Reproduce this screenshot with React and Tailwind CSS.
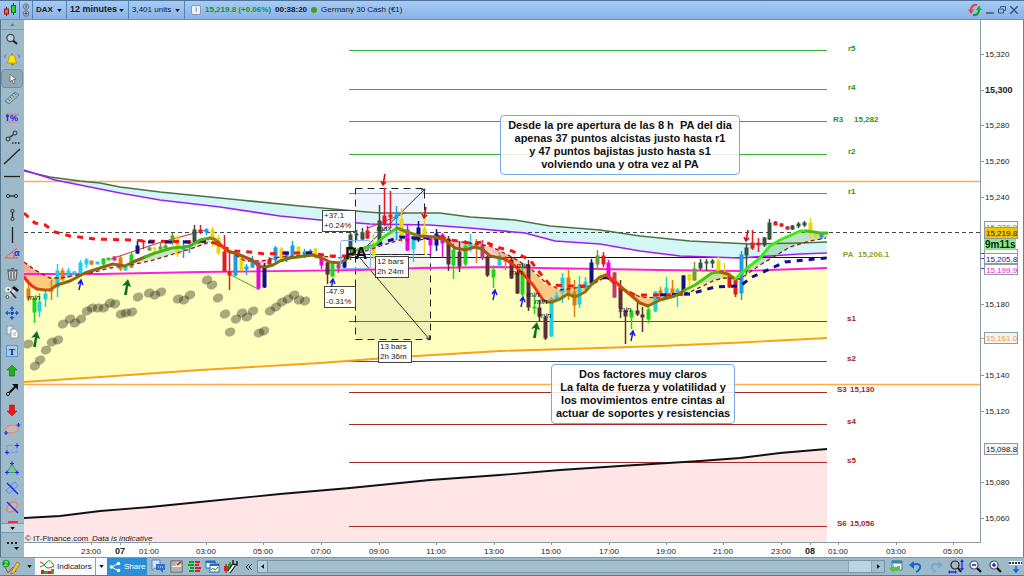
import { useState } from 'react';

const TIMES = [
  [91, '23:00'], [120, '07', true], [149, '01:00'], [206, '03:00'], [263, '05:00'], [321, '07:00'],
  [379, '09:00'], [436, '11:00'], [494, '13:00'], [551, '15:00'], [609, '17:00'], [666, '19:00'],
  [723, '21:00'], [781, '23:00'], [810, '08', true], [838, '01:00'], [896, '03:00'], [953, '05:00'],
];

const PRICES = [
  [54, '15,320'], [90, '15,300', true], [125, '15,280'], [161, '15,260'], [197, '15,240'], [304, '15,180'],
  [375, '15,140'], [411, '15,120'], [482, '15,080'], [518, '15,060'],
];

const LEVELS = [
  { y: 50, label: 'r5', x: 848, ly: 51, up: true },
  { y: 89, label: 'r4', x: 848, ly: 90, up: true },
  { y: 121, label: 'R3', x: 833, ly: 122, value: '15,282', vx: 854, up: true },
  { y: 154, label: 'r2', x: 848, ly: 154, up: true },
  { y: 193, label: 'r1', x: 848, ly: 194, up: true },
  { y: 321, label: 's1', x: 847, ly: 321 },
  { y: 361, label: 's2', x: 847, ly: 361 },
  { y: 392, label: 'S3', x: 837, ly: 392, value: '15,130', vx: 850 },
  { y: 424, label: 's4', x: 847, ly: 424 },
  { y: 462, label: 's5', x: 847, ly: 463 },
  { y: 526, label: 'S6', x: 837, ly: 526, value: '15,056', vx: 850 },
];

const C = {
  cy: '#22cfe0', or: '#dd7d14', gr: '#1fd41f', br: '#5c2e3a', mg: '#f000dd', nv: '#10108c', re: '#e31a24',
  ye: '#e8d80c', bl: '#1c9fe0', dk: '#35553c', ol: '#6f9e32', pk: '#c2387a',
};

// x, high, low, body top, body bottom, colour
const CANDLES = [
  [28, 284, 301, 289, 298, 'or'], [34, 298, 323, 299, 312, 'gr'], [39, 293, 317, 302, 311, 'cy'],
  [45, 290, 307, 294, 299, 'cy'], [51, 280, 300, 290, 291, 'or'], [57, 264, 297, 271, 287, 'cy'],
  [62, 268, 281, 271, 279, 'or'], [68, 268, 278, 271, 277, 'cy'], [74, 271, 275, 272, 274, 'cy'],
  [80, 260, 275, 263, 273, 'cy'], [86, 258, 268, 260, 264, 'cy'], [91, 261, 265, 261, 264, 'or'],
  [97, 262, 264, 262, 264, 'cy'], [103, 258, 267, 259, 264, 'gr'], [108, 258, 260, 258, 260, 'gr'],
  [114, 256, 261, 257, 260, 'pk'], [120, 256, 271, 258, 269, 'or'], [125, 266, 271, 267, 270, 'cy'],
  [131, 252, 268, 255, 267, 'gr'], [137, 241, 254, 246, 253, 'nv'], [143, 240, 249, 241, 242, 're'],
  [149, 245, 251, 248, 250, 'ol'], [154, 247, 252, 248, 249, 'ye'], [160, 243, 250, 247, 249, 'ol'],
  [165, 243, 250, 246, 248, 'ol'], [172, 233, 245, 236, 240, 'ol'], [177, 236, 257, 238, 254, 'ye'],
  [183, 240, 258, 247, 249, 'bl'], [189, 241, 253, 242, 243, 'bl'], [194, 225, 243, 230, 242, 'dk'],
  [200, 225, 234, 230, 231, 're'], [206, 228, 235, 230, 232, 'bl'], [212, 227, 247, 230, 238, 'ye'],
  [218, 235, 255, 238, 253, 'ye'], [224, 235, 272, 252, 271, 're'], [229, 250, 290, 272, 275, 're'],
  [235, 254, 276, 255, 275, 'bl'], [241, 255, 271, 257, 270, 'ye'], [246, 264, 275, 267, 269, 'bl'],
  [252, 256, 268, 262, 267, 'bl'], [258, 262, 290, 263, 288, 'mg'], [264, 263, 288, 266, 287, 'nv'],
  [269, 257, 266, 260, 264, 're'], [275, 246, 262, 248, 260, 'bl'], [281, 247, 262, 249, 259, 'ye'],
  [286, 252, 262, 254, 258, 'bl'], [292, 241, 258, 246, 255, 'bl'], [298, 246, 258, 247, 256, 'ye'],
  [304, 249, 258, 252, 256, 'bl'], [310, 249, 256, 251, 254, 'bl'], [315, 248, 259, 249, 257, 'ye'],
  [321, 254, 269, 258, 265, 'mg'], [327, 262, 284, 263, 274, 'br'], [332, 262, 277, 264, 276, 'gr'],
  [338, 263, 273, 265, 268, 'pk'], [344, 257, 268, 260, 267, 'nv'], [350, 228, 260, 235, 250, 'dk'],
  [356, 230, 240, 234, 235, 'dk'], [362, 228, 240, 233, 239, 'dk'], [367, 226, 239, 231, 238, 're'],
  [373, 234, 259, 243, 255, 'ye'], [379, 205, 243, 221, 242, 'dk'], [384, 188, 226, 216, 224, 're'],
  [390, 191, 228, 215, 217, 're'], [396, 206, 240, 215, 218, 'bl'], [401, 208, 243, 219, 235, 'ye'],
  [407, 225, 251, 230, 250, 'mg'], [413, 236, 262, 240, 249, 'cy'], [418, 221, 242, 228, 240, 'nv'],
  [424, 213, 254, 229, 236, 'ye'], [430, 236, 255, 239, 245, 'mg'], [436, 229, 251, 234, 245, 'nv'],
  [442, 233, 258, 235, 243, 'mg'], [448, 236, 271, 239, 264, 'br'], [453, 243, 279, 250, 265, 'gr'],
  [459, 241, 272, 252, 266, 'br'], [465, 240, 266, 246, 264, 'gr'], [470, 234, 252, 243, 247, 'cy'],
  [476, 239, 263, 244, 247, 'or'], [482, 240, 260, 245, 258, 'pk'], [487, 253, 277, 257, 275, 'br'],
  [493, 265, 288, 270, 277, 'gr'], [499, 252, 267, 256, 265, 'cy'], [505, 256, 270, 259, 261, 'or'],
  [511, 258, 279, 260, 278, 'br'], [517, 266, 294, 273, 293, 'br'], [522, 264, 296, 272, 294, 'gr'],
  [528, 260, 311, 265, 307, 'br'], [534, 295, 314, 307, 308, 'gr'], [539, 300, 321, 308, 316, 'br'],
  [545, 316, 340, 318, 338, 'br'], [551, 297, 337, 299, 336, 'cy'], [556, 292, 302, 296, 300, 'cy'],
  [562, 273, 303, 278, 292, 'cy'], [568, 270, 300, 278, 292, 'or'], [574, 280, 317, 292, 305, 'or'],
  [579, 276, 308, 285, 304, 'cy'], [585, 277, 290, 282, 288, 'cy'], [591, 259, 285, 263, 283, 'nv'],
  [597, 250, 269, 256, 264, 'ol'], [603, 252, 267, 256, 264, 're'], [608, 260, 280, 263, 277, 'mg'],
  [614, 272, 298, 273, 297, 'pk'], [620, 280, 318, 289, 308, 'br'], [625, 310, 344, 311, 316, 'br'],
  [631, 310, 329, 311, 317, 'gr'], [637, 302, 316, 311, 314, 'br'], [642, 307, 332, 315, 317, 'br'],
  [648, 308, 323, 310, 319, 'gr'], [655, 291, 312, 292, 311, 'cy'], [660, 287, 297, 291, 295, 'or'],
  [666, 277, 296, 288, 293, 'cy'], [672, 280, 295, 289, 293, 'or'], [677, 288, 307, 290, 294, 'cy'],
  [683, 275, 292, 276, 290, 'nv'], [689, 274, 285, 275, 280, 'ye'], [694, 262, 281, 269, 280, 'ol'],
  [700, 259, 270, 263, 268, 'dk'], [706, 259, 271, 262, 263, 'dk'], [712, 259, 268, 261, 263, 'dk'],
  [718, 257, 273, 261, 272, 'ye'], [724, 263, 278, 273, 276, 'ye'], [729, 273, 288, 276, 287, 're'],
  [735, 278, 297, 279, 294, 're'], [741, 251, 300, 255, 293, 'bl'], [746, 244, 274, 248, 255, 'dk'],
  [752, 230, 250, 243, 248, 're'], [758, 238, 252, 243, 245, 're'], [764, 237, 247, 238, 245, 'dk'],
  [769, 219, 240, 223, 239, 'dk'], [775, 221, 225, 222, 225, 're'], [781, 223, 227, 224, 226, 're'],
  [787, 226, 230, 227, 229, 're'], [792, 225, 230, 226, 229, 'dk'], [798, 222, 228, 224, 226, 'dk'],
  [804, 221, 227, 223, 225, 'dk'], [810, 218, 238, 223, 233, 'ye'], [815, 234, 238, 235, 237, 'ye'],
  [821, 233, 239, 234, 237, 'bl'],
];

const DOTS = [
  [28, 344], [35, 366], [40, 360], [46, 350], [52, 342], [58, 340], [63, 324], [70, 319], [75, 323], [81, 319],
  [87, 311], [92, 308], [98, 308], [104, 308], [110, 303], [115, 304], [121, 314], [126, 313], [132, 312],
  [138, 297], [149, 293], [155, 295], [161, 292], [178, 299], [184, 300], [190, 295], [207, 280], [212, 285],
  [218, 298], [225, 314], [230, 332], [236, 319], [242, 313], [247, 317], [253, 311], [259, 333], [264, 331],
  [270, 311], [276, 307], [282, 302], [288, 299], [294, 295], [299, 300], [305, 301],
];

const GREEN_MA = '24,171 50,177 80,181 100,183 120,187 160,192 200,196 240,200 300,206 355,211 380,213 440,213 470,217 515,220 550,226 600,230 640,236 690,241 750,244 800,243 827,242';
const PURPLE_MA = '24,170 55,180 80,185 120,193 160,200 220,207 280,216 320,220 370,224 430,225 470,228 525,233 555,241 600,244 640,251 680,256 740,258 800,254 827,253';
const PURPLE_BACK = '827,253 800,254 740,258 680,256 640,251 600,244 555,241 525,233 470,228 430,225 370,224 320,220 280,216 220,207 160,200 120,193 80,185 55,180 24,170';
const MAGENTA_MA = '24,274 100,274 200,272 360,270 420,268 500,267 540,268 660,270 740,271 827,268';
const ORANGE_BACK = '827,338 770,341 730,343 660,346 600,348 500,351 400,357 320,363 200,370 100,377 24,382';
const BLACK_MA = '24,518 60,516 100,511 150,507 200,502 280,494 350,488 430,480 500,475 560,470 620,466 700,461 740,458 780,453 827,449';

// the ribbon core line, coloured by trend
const CORE = [
  ['#e8301a', '24,277 28,282 32,286 37,289'],
  ['#c2560f', '37,289 45,290 50,290 57,285'],
  ['#87680d', '57,285 70,281 85,273 100,268 113,264 125,266 133,262 145,257'],
  ['#45b414', '145,257 155,253 172,248 183,247 190,246 200,240 210,238'],
  ['#9a7a10', '210,238 214,239 218,242'],
  ['#ef3112', '218,242 223,247 228,251'],
  ['#a0560f', '228,251 240,255 252,260 260,267 266,267'],
  ['#77730d', '266,267 273,265 280,261 290,258 305,256 313,255'],
  ['#9a5f12', '313,255 322,258 330,262 340,263'],
  ['#77730d', '340,263 347,259 354,251'],
  ['#3fdc12', '354,251 365,248 375,245 385,236 397,228'],
  ['#7f8710', '397,228 410,233 420,236'],
  ['#9a5f12', '420,236 435,237 445,240 455,248 465,250 475,247 482,249 490,256 505,259'],
  ['#ed3512', '505,259 515,266 525,276 533,285 543,300'],
  ['#9a5f12', '543,300 547,302 552,302'],
  ['#87780d', '552,302 560,299 568,294 575,297 585,292 592,284 600,277 606,275'],
  ['#f0340f', '606,275 615,281 621,287'],
  ['#b0560f', '621,287 627,292 640,303 648,306'],
  ['#7f740d', '648,306 660,300 675,296 685,290'],
  ['#4ec010', '685,290 695,285 705,278 712,273 720,272'],
  ['#a5600f', '720,272 728,274 735,279'],
  ['#3cec12', '735,279 745,270 760,258 770,246 780,240 800,231 806,231'],
  ['#55b818', '806,231 814,232 820,233 827,233'],
];

const BANDS = [
  ['#f6a94f', 0.6, '24,262 35,270 50,278 62,278 57,285 50,290 37,289 24,277'],
  ['#f59a9a', 0.6, '24,262 35,270 50,278 37,275 24,272'],
  ['#8fce8f', 0.5, '145,257 172,248 190,246 210,238 210,242 190,250 160,258 133,264'],
  ['#f5a8a0', 0.6, '222,247 245,261 262,261 275,259 262,267 252,260 240,255'],
  ['#8fce8f', 0.5, '354,251 375,245 397,228 410,235 400,240 380,246'],
  ['#f5a8a0', 0.6, '445,240 470,243 490,246 505,253 515,258 505,259 490,256 475,247 465,250 455,248'],
  ['#fbb26c', 0.7, '490,249 505,254 518,259 532,271 545,284 560,290 572,288 590,286 585,291 568,294 552,302 545,301 533,285 515,266'],
  ['#fbb26c', 0.7, '608,276 620,286 635,294 648,298 665,297 648,306 640,303 625,291'],
  ['#9dd08a', 0.6, '690,288 705,278 712,273 728,273 735,279 725,278 712,281'],
  ['#8fd0a0', 0.6, '735,279 745,270 760,258 770,246 780,240 800,231 827,233 827,238 810,241 790,247 760,265'],
];

const ARROWS = [
  [80, 280, 'blue'], [332, 279, 'blue'], [494, 290, 'blue'], [522, 297, 'blue'], [632, 331, 'blue'],
  [36, 331, 'green'], [127, 279, 'green'], [536, 322, 'green'],
  [383, 186, 'red'], [424, 219, 'red'], [746, 242, 'red'],
];

const MINS = [[34, 300], [516, 275], [523, 268], [533, 297], [541, 304], [545, 318], [625, 312]];

function Arrow({ x, y, kind }) {
  if (kind === 'green') {
    return <path d={`M${x + 1} ${y} L${x - 5} ${y + 7} L${x - 1} ${y + 6} L${x - 3} ${y + 16} L${x} ${y + 16} L${x + 1} ${y + 7} L${x + 4} ${y + 8} Z`} fill="#077020" />;
  }
  if (kind === 'red') {
    return <path d={`M${x + 2} ${y - 12} L${x} ${y - 1} M${x - 2} ${y - 5} L${x} ${y - 1} L${x + 3} ${y - 4}`} stroke="#d80c0c" strokeWidth="1.6" fill="none" />;
  }
  return <path d={`M${x - 1} ${y + 10} L${x + 1} ${y + 1} M${x - 2} ${y + 4} L${x + 1} ${y} L${x + 3} ${y + 5}`} stroke="#1414ee" strokeWidth="1.4" fill="none" />;
}

function PriceChart() {
  return (
    <svg viewBox="24 20 956 523" preserveAspectRatio="xMinYMin meet" className="block h-full w-full font-['Liberation_Sans',Arial,sans-serif] text-[8px]">
      <polygon points={`${MAGENTA_MA} ${ORANGE_BACK}`} fill="#ffffbf" />
      <polygon points={`${BLACK_MA} 827,543 24,543`} fill="#ffe5e5" />
      <polygon points={`${GREEN_MA} ${PURPLE_BACK}`} fill="#d5f6f6" />
      {BANDS.map(([fill, opacity, pts]) => <polygon key={pts} points={pts} fill={fill} opacity={opacity} />)}

      {/* full-width horizontals */}
      <path d="M24 181.5H980M24 384.5H980" stroke="#ffab4d" strokeWidth="1.5" />
      <path d="M24 232.5H980" stroke="#444" strokeDasharray="4 3" />

      {LEVELS.map((l) => (
        <g key={l.label} fill={l.up ? '#1a9a1a' : '#a81c1c'} fontWeight="bold">
          <path d={`M349 ${l.y}.5H827`} stroke={l.up ? '#2fae2f' : '#a52a2a'} />
          <text x={l.x} y={l.ly}>{l.label}</text>
          {l.value && <text x={l.vx} y={l.ly}>{l.value}</text>}
        </g>
      ))}
      <path d="M349 257.5H827" stroke="#111" />
      <text x="843" y="257" fontWeight="bold" fill="#9c9a1c">PA</text>
      <text x="858" y="257" fontWeight="bold" fill="#9c9a1c">15,206.1</text>

      {DOTS.map(([x, y]) => (
        <ellipse key={`${x}-${y}`} cx={x} cy={y} rx="5.4" ry="4.4" transform={`rotate(-25 ${x} ${y})`} fill="#333322" opacity="0.42" />
      ))}

      {/* measured zones */}
      <g stroke="#222" strokeDasharray="7 5">
        <rect x="355.5" y="188.5" width="69" height="66" fill="#e6ecff" fillOpacity="0.5" />
        <rect x="355.5" y="254.5" width="75" height="85" fill="#c8d0a0" fillOpacity="0.25" />
      </g>
      <path d="M356 257L425 189M360 258L430 340M426 338l4 2-1-5M421 190l4-1-1 4" stroke="#333" fill="none" />

      <polyline points={GREEN_MA} fill="none" stroke="#4a7344" strokeWidth="1.6" />
      <polyline points={PURPLE_MA} fill="none" stroke="#a31cf5" strokeWidth="1.6" />
      <polyline points={MAGENTA_MA} fill="none" stroke="#ff22cc" strokeWidth="1.8" />
      <polyline points={ORANGE_BACK} fill="none" stroke="#f9a11b" strokeWidth="1.8" />
      <polyline points={BLACK_MA} fill="none" stroke="#111" strokeWidth="1.8" />
      <path d="M111 259L158 243L206 230M368 228L405 213" stroke="#c22a3a" fill="none" />
      <path d="M231 275L258 289" stroke="#2fae2f" />

      {CANDLES.map(([x, hi, lo, top, bottom, c]) => (
        <g key={x} stroke={C[c]} fill={C[c]}>
          <path d={`M${x}.5 ${hi}V${lo}`} strokeWidth="1.5" />
          <rect x={x - 1} y={top} width="3" height={bottom - top} strokeWidth="1" />
        </g>
      ))}

      <polyline points="24,262 35,270 50,278 60,278 90,273 110,268 130,265 150,261 180,252 190,249 210,242 222,247 245,261 262,261 280,257 310,255 330,257 345,258 380,246 400,240 440,239 470,243 490,246 510,256 530,268 545,282 560,290 590,286 605,277 620,287 640,297 660,298 690,292 715,280 725,278 740,279 760,265 790,247 810,241 826,238" fill="none" stroke="#a01212" strokeWidth="1.3" strokeDasharray="4 3" />
      <g fill="none" strokeWidth="3" strokeDasharray="6 6">
        <polyline points="24,213 35,223 45,225 55,232 70,236 95,239 130,240 145,241 200,242" stroke="#f81414" />
        <polyline points="200,241 215,243 225,248 235,251 250,252 265,254 285,253 310,253 330,256 350,256" stroke="#f81414" />
        <polyline points="365,248 385,242 400,237 418,238 440,237" stroke="#10108c" />
        <polyline points="440,237 452,240 470,243 485,242 500,248 512,251 530,260 540,273 550,285 570,286 590,286" stroke="#f81414" />
        <polyline points="592,283 602,278 610,277" stroke="#10108c" />
        <polyline points="610,279 620,288 635,295 665,295 690,294" stroke="#f81414" />
        <polyline points="660,295 690,294 715,287 740,286 752,277 770,269 785,262 805,260 827,258" stroke="#10108c" />
      </g>
      <path d="M148 242h6M165 242h7M183 242h7M200 241h6M283 253h6M306 253h6" stroke="#10108c" strokeWidth="3" />
      {CORE.map(([stroke, pts]) => (
        <polyline key={pts} points={pts} fill="none" stroke={stroke} strokeWidth="3" strokeLinecap="round" strokeLinejoin="round" />
      ))}

      <rect x="340.5" y="240.5" width="30" height="28" rx="2" fill="none" stroke="#8ab0f5" />
      <text x="345" y="259" fontSize="17" fontWeight="bold" fill="#111">PA</text>
      {MINS.map(([x, y]) => (
        <text key={`${x}-${y}`} x={x} y={y} textAnchor="middle" fontStyle="italic" fill="#111">min</text>
      ))}
      <text x="384" y="231" textAnchor="middle" fontStyle="italic" fill="#111">max</text>
      {ARROWS.map(([x, y, kind]) => <Arrow key={`${x}-${y}`} x={x} y={y} kind={kind} />)}

      <text x="25" y="541" fill="#222">© IT-Finance.com</text>
      <text x="92" y="541" fontStyle="italic" fill="#222">Data is indicative</text>
      <path d="M24 542.5H980" stroke="#8a9aa5" />
    </svg>
  );
}

const TAGS = [
  { y: 221, h: 12, text: '15,220.0', cls: 'fill-[#3aaa3a]', bg: '#f4fbf4' },
  { y: 249, h: 10, text: '15,208.2', cls: 'fill-[#a31cf5]', bg: '#ffffff' },
  { y: 253, h: 10, text: '15,205.8', cls: 'fill-[#14148c]', bg: '#ffffff' },
  { y: 264, h: 10, text: '15,199.9', cls: 'fill-[#f020d0]', bg: '#ffffff' },
  { y: 332, h: 11, text: '15,161.0', cls: 'fill-[#f0a030]', bg: '#f4f4f4' },
  { y: 443, h: 11, text: '15,098.8', cls: 'fill-[#222222]', bg: '#f4f4f4' },
  { y: 227, h: 11, text: '15,219.8', cls: 'fill-[#222222]', bg: '#f5c400' },
];

function PriceAxis() {
  return (
    <svg viewBox="980 20 44 537" preserveAspectRatio="xMinYMin meet" className="block w-11 shrink-0 bg-white font-['Liberation_Sans',Arial,sans-serif] text-[8px]">
      <path d="M980.5 20V543" stroke="#8a9aa5" />
      {PRICES.map(([y, text, bold]) => (
        <g key={text}>
          <path d={`M981 ${y}.5h3`} stroke="#8a9aa5" />
          <text x="985" y={y + 3} fontWeight={bold ? 'bold' : 'normal'} fontSize={bold ? 9 : 8} fill="#222">{text}</text>
        </g>
      ))}
      <path d="M981 253.5h3M981 258.5h3M981 268.5h3" stroke="#7a22c5" />
      <path d="M981 338.5h3" stroke="#f0a030" />
      {TAGS.map((t) => (
        <g key={t.text}>
          <rect x="984.5" y={t.y + 0.5} width="33" height={t.h} fill={t.bg} stroke="#8d9aa3" />
          <text x="986" y={t.y + 9} className={t.cls}>{t.text}</text>
        </g>
      ))}
      <rect x="984" y="239" width="32" height="11" fill="#8fe48f" />
      <text x="985" y="248" fontSize="10" fontWeight="bold" fill="#0a2a0a">9m11s</text>
      <path d="M1023.5 20V557" stroke="#6b8296" />
    </svg>
  );
}

function TimeAxis() {
  return (
    <svg viewBox="24 543 956 14" preserveAspectRatio="xMinYMin meet" className="block h-3.5 w-full bg-white font-['Liberation_Sans',Arial,sans-serif] text-[8px]">
      {TIMES.map(([x, text, bold]) => (
        <g key={x}>
          <path d={`M${x}.5 543v2`} stroke="#8a9aa5" />
          <text x={x} y="554" textAnchor="middle" fontWeight={bold ? 'bold' : 'normal'} fontSize={bold ? 9 : 8} fill="#222">{text}</text>
        </g>
      ))}
    </svg>
  );
}

function Note({ lines, className }) {
  return (
    <div className={`absolute rounded-sm border border-[#7aa7ea] bg-white/85 py-[3px] text-center text-[11px] leading-[13px] font-bold whitespace-pre text-[#111] ${className}`}>
      {lines.map((l) => <p key={l}>{l}</p>)}
    </div>
  );
}

function Measure({ lines, className }) {
  return (
    <div className={`absolute border border-[#444] bg-white/95 pl-px pr-1 text-[8px] leading-[10px] whitespace-nowrap text-[#222] ${className}`}>
      {lines.map((l) => <p key={l}>{l}</p>)}
    </div>
  );
}

const blue = '#1a2cf0';
const TOOLS = [
  ['Zoom', <><circle cx="6.500" cy="6" r="3.600" fill="#bcd3df" stroke="#444" strokeWidth="1.200" /><path d="M9 8.500L13 12" stroke="#222" strokeWidth="2" /></>],
  ['Alerts', <><path d="M3 12q2-2 2-6q3-4 6 0q0 4 2 6z" fill="#ffe812" stroke="#b09400" strokeWidth=".8" /><path d="M7 13.500h3M8 2.500V4" stroke="#a88900" strokeWidth="1.500" /><path d="M2 3Q0 5 1 7M14 3q2 2 1 4" stroke="#777" fill="none" /></>],
  ['Pointer', <path d="M6 3v8l2-2 1.500 4 1.500-1-1.500-3.500H12z" fill="#eee" stroke="#666" strokeWidth=".8" />],
  ['Ruler', <><path d="M1 11L11 2l4 3L5 14z" fill="#aab9c2" stroke="#647986" /><path d="M4 9l2 2M6 7l2 2M8 5l2 2M10 3l2 2" stroke="#647986" /></>],
  ['Percent', <><path d="M1 4h14M1 12h14" stroke="#ff7070" /><path d="M3.500 5v6M2 6.500L3.500 5 5 6.500" stroke={blue} fill="none" strokeWidth="1.300" /><text x="6" y="11" fontSize="9" fontWeight="bold" fill={blue}>%</text></>],
  ['Segment options', <><circle cx="4" cy="10" r="2" fill="none" stroke="#333" /><circle cx="11" cy="4" r="2" fill="none" stroke="#333" /><path d="M5.500 8.500l4-3" stroke="#333" strokeWidth="1.500" /><path d="M8 14h1.500M11 14h1.500M14 14h1.500" stroke="#222" strokeWidth="1.500" /></>],
  ['Trend line', <path d="M0 15L16 0" stroke="#222" strokeWidth="1.300" />],
  ['Horizontal line', <path d="M0 8.500h16" stroke="#222" strokeWidth="1.300" />],
  ['Horizontal segment', <><circle cx="4" cy="8" r="1.600" fill="none" stroke="#333" /><circle cx="12" cy="8" r="1.600" fill="none" stroke="#333" /><path d="M5.500 8h5" stroke="#222" strokeWidth="1.300" /></>],
  ['Vertical segment', <><circle cx="8.500" cy="4" r="1.600" fill="none" stroke="#333" /><circle cx="8.500" cy="12" r="1.600" fill="none" stroke="#333" /><path d="M8.500 5.500v5" stroke="#222" strokeWidth="1.300" /></>],
  ['Vertical line', <path d="M8.500 0v16" stroke="#222" strokeWidth="1.300" />],
  ['Angle', <><path d="M1 12L13 2M1 12h13M8 6q3 2 2 6" stroke="#f25050" fill="none" /><text x="10" y="10" fontSize="9" fontWeight="bold" fill={blue}>α</text></>],
  ['Delete', <><path d="M4 5h9l-1 9H5z" fill="#cfd8dc" stroke="#555" /><path d="M3 4h11M7 2.500h3M7 6v7M10 6v7" stroke="#555" strokeWidth="1.200" /></>],
  ['Settings', <><path d="M3 13L12 4" stroke="#ddd" strokeWidth="2.500" /><path d="M4 4l8 9" stroke="#333" strokeWidth="1.500" /><path d="M10 1l5 4-2 2-5-4z" fill="#111" /><circle cx="4" cy="4.500" r="2" fill="none" stroke="#eee" strokeWidth="1.500" /><circle cx="3.500" cy="12" r="1.500" fill="#eee" stroke="#444" /></>],
  ['Move', <><path d="M8 3v10M3 8h10" stroke="#1460d2" strokeWidth="1.600" strokeDasharray="3 1" /><path d="M8 1l2.500 3h-5zM8 15l2.500-3h-5zM1 8l3-2.500v5zM15 8l-3-2.500v5z" fill="#1460d2" /><circle cx="8" cy="8" r="1.500" fill="#123a8a" /></>],
  ['Copy', <><path d="M3 2h6v8H3z" fill="#e6edf1" stroke="#8799a3" /><path d="M7 5h4l3 3v6H7z" fill="#fff" stroke="#8799a3" /><path d="M9 9h3M9 11h3" stroke="#9aa" /></>],
  ['Text', <><rect x="2.500" y="2.500" width="11" height="11" fill="#a9ccee" stroke="#5a92ee" /><text x="8" y="11.500" textAnchor="middle" fontSize="9" fontWeight="bold" fontFamily="Liberation Serif" fill="#111">T</text></>],
  ['Up mark', <path d="M8 2l5 5h-2.500v6h-5V7H3z" fill="#1fb01f" stroke="#0b7d0b" strokeWidth=".7" />],
  ['Arrow line', <><circle cx="4" cy="12" r="1.600" fill="none" stroke="#222" /><path d="M5 11l7-7" stroke="#111" strokeWidth="2" /><path d="M14 2v6L8 2z" fill="#111" /></>],
  ['Down mark', <path d="M8 14l5-5h-2.500V3h-5v6H3z" fill="#f01616" stroke="#b70808" strokeWidth=".5" />],
  ['Ellipse', <><ellipse cx="8" cy="8" rx="6.500" ry="4" fill="#c6b7b3" stroke="#f0835c" transform="rotate(-10 8 8)" /><path d="M0 12h4M2 10v4M12.500 4h4M14.500 2v4" stroke={blue} strokeWidth="1.200" /></>],
  ['Rectangle', <><rect x="3" y="4.500" width="10" height="7" fill="none" stroke="#6f9cf5" /><path d="M1 11.500h4M3 9.500v4M11 4.500h4M13 2.500v4" stroke={blue} strokeWidth="1.200" /></>],
  ['Triangle', <><path d="M8 4l5 8.500H3z" fill="#8bbf9f" stroke="#3aa060" /><path d="M6 3.500h4M8 1.500v4M1 12.500h4M3 10.500v4M11 12.500h4M13 10.500v4" stroke={blue} strokeWidth="1.200" /></>],
  ['Channel', <><path d="M2 10l5-4 3 3-5 5zM7 5l4-3 3 4-4 3z" fill="none" stroke="#5a8cf5" /><path d="M3 3l11 11" stroke={blue} strokeWidth="1.500" /></>],
  ['Rotated ellipse', <><ellipse cx="8" cy="8" rx="6" ry="4" fill="#c6b7b3" stroke="#f0734c" transform="rotate(-45 8 8)" /><path d="M3 3l11 11" stroke={blue} strokeWidth="1.500" /></>],
];

function Caret({ className }) {
  return <svg viewBox="0 0 6 4" className={`h-[3px] w-[5px] shrink-0 ${className || ''}`}><path d="M0 0h6L3 4z" fill="#111" /></svg>;
}

function Toolbar() {
  const [active, setActive] = useState('Pointer');
  return (
    <nav aria-label="Drawing tools" className="flex w-6 shrink-0 flex-col border-l border-[#58768c] bg-[#9cbac9]">
      <button aria-label="Scroll up" className="flex h-2.5 shrink-0 items-center justify-center border-b border-[#7d9cab]">
        <svg viewBox="0 0 6 4" className="h-[3px] w-[5px]"><path d="M3 0l3 4H0z" fill="#62808f" /></svg>
      </button>
      {TOOLS.map(([name, icon]) => (
        <button
          key={name}
          aria-label={name}
          onClick={() => setActive(name)}
          className={`mr-px flex min-h-0 flex-1 items-center justify-center rounded-sm border ${active === name ? 'border-[#7790a0] bg-[#90a8b5]' : 'border-transparent'}`}
        >
          <svg viewBox="0 0 16 16" className="size-4 shrink-0 overflow-visible">{icon}</svg>
        </button>
      ))}
      <div className="flex h-1.5 shrink-0 items-end justify-center"><span className="h-0.5 w-2.5 bg-red-500" /></div>
      <button aria-label="More tools" className="flex h-2.5 shrink-0 items-center justify-center border-y border-[#7d9cab] bg-[#b5cfdc]"><Caret /></button>
      <button aria-label="Toolbar menu" className="flex h-6 shrink-0 items-center justify-center">
        <svg viewBox="0 0 14 10" className="h-2.5 w-3.5"><path d="M1 3h2M5 3h2M9 3h2" stroke="#222" strokeWidth="2" /><path d="M8 7h5l-2.500 3z" fill="#111" /></svg>
      </button>
    </nav>
  );
}

function Picker({ label, value, className }) {
  return (
    <div className={`relative flex h-full items-center border-r border-[#5684b8] ${className}`}>
      <select aria-label={label} className="h-full w-full appearance-none bg-transparent pl-[3px] outline-none">
        <option>{value}</option>
      </select>
      <Caret className="pointer-events-none absolute right-1" />
    </div>
  );
}

function Header() {
  return (
    <header className="flex h-5 shrink-0 items-center border-t border-b border-t-[#4f7097] border-b-[#6d93bd] bg-linear-to-b from-[#a6cbf7] to-[#8ab2e3] text-[8px] text-[#1a1a1a]">
      <div className="flex h-full w-5 shrink-0 items-center justify-center border-r border-[#5684b8]">
        <svg viewBox="0 0 14 14" className="size-3.5">
          <path d="M3.500 4v9M10.500 0v12" stroke="#333" />
          <rect x="1.500" y="6" width="4" height="5" fill="#f25c5c" stroke="#a01515" />
          <rect x="8.500" y="2.500" width="4" height="7" fill="#32d032" stroke="#0c7a0c" />
        </svg>
      </div>
      <div className="flex h-full w-[13px] shrink-0 items-center justify-center border-r border-[#5684b8]">
        <svg viewBox="0 0 8 14" className="h-3.5 w-2">
          <g fill="#a6b2c0" stroke="#65788e"><circle cx="4" cy="3.500" r="2.800" /><circle cx="4" cy="10.500" r="2.800" /></g>
          <path d="M4 2v3M4 9v3M2.500 10.500h3" stroke="#4c5d70" />
        </svg>
      </div>
      <Picker label="Symbol" value="DAX" className="w-[34px] font-bold" />
      <Picker label="Period" value="12 minutes" className="w-[62px] text-[9px] font-bold" />
      <Picker label="History" value="3,401 units" className="w-14" />
      <button aria-label="Instrument info" className="ml-1.5 flex size-2.5 items-center justify-center rounded-xs border border-[#8a98a8] bg-[#eef2f6] text-[8px] leading-none font-bold text-[#999]">i</button>
      <span className="ml-1 font-bold text-[#17980f]">15,219.8 (+0.06%)</span>
      <span className="ml-1 font-bold">00:38:20</span>
      <span className="mx-1 size-1.5 rounded-full bg-[#46a012]" />
      <span>Germany 30 Cash (€1)</span>
      <div className="ml-auto flex items-center gap-1 pr-1.5 text-[#3c5878]">
        <button aria-label="Refresh">
          <svg viewBox="0 0 14 14" className="size-3.5" fill="none" strokeWidth="2.200">
            <path d="M9 2Q3 1 3 8" stroke="#e24444" /><path d="M0 6.500h6L3 11z" fill="#ef4444" />
            <path d="M5 12q6 1 6-6" stroke="#18a018" /><path d="M8 7h6L11 2.500z" fill="#18b418" />
          </svg>
        </button>
        <button aria-label="Minimise"><svg viewBox="0 0 8 8" className="size-2"><path d="M0 7h8" stroke="currentColor" strokeWidth="1.500" /></svg></button>
        <button aria-label="Restore"><svg viewBox="0 0 8 8" className="size-2" fill="none" stroke="currentColor"><path d="M2.500 2V.5h5v4H6M.5 3h5v4h-5z" /></svg></button>
        <button aria-label="Close"><svg viewBox="0 0 8 8" className="size-2"><path d="M0 0l8 8M8 0L0 8" stroke="currentColor" strokeWidth="1.500" /></svg></button>
      </div>
    </header>
  );
}

const FOOT_LEFT = [
  ['Comments', <><path d="M1 1h8v8H4l-3 2z" fill="#d6e6f7" stroke="#5a86c0" /><path d="M5 5h9v6h-2v3l-3-3H5z" fill="#2f6fd0" /><path d="M7 8h1M9 8h1M11 8h1" stroke="#fff" /></>],
  ['News', <><rect x="2" y="2" width="11" height="11" fill="#f4f0ec" stroke="#555" /><path d="M3 4h5M3 6h4M3 9h9M3 11h9" stroke="#777" /><path d="M8 6l4-3" stroke="#d22" strokeWidth="2" /></>],
  ['Order book', <><path d="M2 2h5v2H2zM1 5h6v2H1zM3 8h4v2H3zM2 11h5v2H2z" fill="#14a014" /><path d="M8 2h5v2H8zM8 5h4v2H8zM8 8h6v2H8zM8 11h5v2H8z" fill="#dc1e1e" /></>],
  ['Windows', <><rect x="1" y="2" width="9" height="7" fill="#fff" stroke="#2b68c4" /><rect x="5" y="5" width="9" height="8" fill="#fff" stroke="#2b68c4" /><path d="M5 6h9M1 3h9" stroke="#2b68c4" strokeWidth="2" /><path d="M6 11l2-2 2 2 3-3" stroke="#18a018" fill="none" /></>],
  ['Trading tools', <><path d="M3 5v9M7 3v9" stroke="#333" /><path d="M1 7h4v5H1z" fill="#dc1e1e" /><path d="M5 5h4v5H5z" fill="#14a014" /><path d="M6 13l5-7" stroke="#222" strokeWidth="4" /><path d="M6 13l5-7" stroke="#eee" strokeWidth="2" /><path d="M10 1v4l4 1V2" stroke="#222" fill="none" strokeWidth="1.500" /></>],
];

const FOOT_RIGHT = [
  ['Go to date', <><path d="M4 2h10v9H4z" fill="#e9f2f7" stroke="#3787a8" /><path d="M4 3h10" stroke="#3787a8" strokeWidth="3" /><path d="M9 7h3v3H9z" fill="#f07878" /><path d="M1 10l5-4v2h5v4H6v2z" fill="#4ec44e" /></>],
  ['Undo', <><path d="M4 6q9-3 8 3-1 3-4 4" stroke="#1668d8" strokeWidth="2" fill="none" /><path d="M1 6l5-4v8z" fill="#1668d8" /></>],
  ['Redo', <><path d="M12 6Q3 3 4 9q1 3 4 4" stroke="#7aa9cb" strokeWidth="2" fill="none" /><path d="M15 6l-5-4v8z" fill="#7aa9cb" /></>],
  ['Fit view', <><circle cx="7" cy="6" r="4" fill="#a8b8c2" stroke="#222" strokeWidth="1.200" /><path d="M10 9l3 4" stroke="#111" strokeWidth="2" /><path d="M1 13h7M14 2v8" stroke={blue} strokeWidth="1.300" /><path d="M0 13l2-2v4zM9 13l-2-2v4zM14 0l-2 3h4zM14 12l-2-3h4z" fill={blue} /></>],
  ['Zoom out', <><circle cx="6" cy="6" r="4" fill="#eef4f8" stroke="#555" strokeWidth="1.200" /><path d="M4 6h4" stroke={blue} strokeWidth="1.600" /><path d="M9 9l4 4" stroke="#111" strokeWidth="2.200" /></>],
  ['Zoom in', <><circle cx="6" cy="6" r="4" fill="#eef4f8" stroke="#555" strokeWidth="1.200" /><path d="M4 6h4M6 4v4" stroke={blue} strokeWidth="1.600" /><path d="M9 9l4 4" stroke="#111" strokeWidth="2.200" /></>],
  ['Hide axis', <><path d="M1 4h13" stroke="#fff" strokeWidth="4" /><path d="M1 4h13" stroke="#333" strokeWidth="2" strokeDasharray="2 1" /><path d="M8 7v5M5.500 10L8 13l2.500-3" stroke="#1668d8" strokeWidth="1.600" fill="none" /></>],
];

function Footer() {
  return (
    <footer className="flex h-[19px] shrink-0 items-stretch border-y border-t-[#7d9cab] border-b-[#5d7a8a] bg-[#9cbac9] text-[8px] text-[#222]">
      <button aria-label="Edit objects" className="flex w-6 shrink-0 items-center justify-center">
        <svg viewBox="0 0 20 16" className="h-4 w-5 font-['Liberation_Sans',sans-serif]">
          <path d="M3 8l3 6 5-6 3 5" stroke="#c33" fill="none" /><path d="M9 13L15 3l3 2-6 9-3 1z" fill="#f2c33a" stroke="#806010" strokeWidth=".6" />
          <circle cx="4" cy="4.500" r="3.800" fill="#17a317" /><text x="4" y="7" textAnchor="middle" fontSize="7" fill="#fff">2</text>
        </svg>
      </button>
      <button aria-label="Edit options" className="flex w-[11px] shrink-0 items-center justify-center"><Caret /></button>
      <button className="flex w-[61px] shrink-0 items-center gap-0.5 border-r border-[#8aa] bg-[#f7f9fa] pl-1">
        <svg viewBox="0 0 16 15" className="h-[15px] w-4"><path d="M1 3q3 0 5 4t9 0" stroke="#e02020" fill="none" /><path d="M1 8q4-1 7-5t7 4" stroke="#20a020" fill="none" /><path d="M2 11h3v4H2zM9 12h3v3H9z" fill="#e02020" /><path d="M5 12h4v3H5zM12 10h3v5h-3z" fill="#20b020" /></svg>
        Indicators
      </button>
      <button aria-label="Indicator list" className="flex w-[11px] shrink-0 items-center justify-center bg-[#f7f9fa]"><Caret /></button>
      <button className="flex w-10 shrink-0 items-center gap-[3px] bg-[#2a8fd8] pl-0.5 text-white">
        <svg viewBox="0 0 12 12" className="size-3"><path d="M10 2L2.500 6l7.500 4" stroke="#fff" fill="none" /><circle cx="9.500" cy="2.500" r="1.800" fill="#fff" /><circle cx="2.500" cy="6" r="1.800" fill="#fff" /><circle cx="9.500" cy="9.500" r="1.800" fill="#fff" /></svg>
        Share
      </button>
      <div className="flex shrink-0 items-center gap-[3px] pl-1">
        {FOOT_LEFT.map(([name, icon]) => (
          <button key={name} aria-label={name}><svg viewBox="0 0 15 15" className="size-[15px]">{icon}</svg></button>
        ))}
        <button aria-label="Collapse" className="ml-1"><svg viewBox="0 0 8 8" className="size-2"><path d="M4 1L1 4l3 3M7 1L4 4l3 3" stroke="#335" fill="none" /></svg></button>
      </div>
      <div className="my-0.5 ml-1 flex min-w-0 flex-1 items-stretch border border-[#7893a2] bg-[#a3bfcd]">
        <button aria-label="Scroll left" className="flex w-2.5 items-center justify-center border-r border-[#7893a2] bg-[#b4cfdd]"><svg viewBox="0 0 4 6" className="h-[5px] w-[3px]"><path d="M4 0v6L0 3z" fill="#111" /></svg></button>
        <div className="ml-auto w-6 border-x border-[#8ba5b3] bg-[#bad5e5]" />
        <button aria-label="Scroll right" className="flex w-3 items-center justify-center"><svg viewBox="0 0 4 6" className="h-[5px] w-[3px]"><path d="M0 0v6l4-3z" fill="#111" /></svg></button>
      </div>
      <div className="flex shrink-0 items-center gap-1 pl-[3px]">
        {FOOT_RIGHT.map(([name, icon]) => (
          <button key={name} aria-label={name}><svg viewBox="0 0 16 15" className="h-[15px] w-4 overflow-visible">{icon}</svg></button>
        ))}
      </div>
    </footer>
  );
}

export default function App() {
  return (
    <div className="flex h-screen flex-col overflow-hidden bg-white font-['Liberation_Sans',Arial,sans-serif]">
      <Header />
      <div className="flex min-h-0 flex-1">
        <Toolbar />
        <main className="flex min-w-0 flex-1 flex-col">
          <div className="relative min-h-0 flex-1">
            <PriceChart />
            <Note
              className="top-[95px] left-[476px] w-60"
              lines={['Desde la pre apertura de las 8 h  PA del dia', 'apenas 37 puntos alcistas justo hasta r1', 'y 47 puntos bajistas justo hasta s1', 'volviendo una y otra vez al PA']}
            />
            <Note
              className="top-[344px] left-[527px] w-46"
              lines={['Dos factores muy claros', 'La falta de fuerza y volatilidad y', 'los movimientos entre cintas al', 'actuar de soportes y resistencias']}
            />
            <Measure className="top-[190px] left-[298px]" lines={['+37.1', '+0.24%']} />
            <Measure className="top-[266px] left-[300px]" lines={['-47.9', '-0.31%']} />
            <Measure className="top-[236px] left-[351px]" lines={['12 bars', '2h 24m']} />
            <Measure className="top-[321px] left-[354px]" lines={['13 bars', '2h 36m']} />
          </div>
          <TimeAxis />
        </main>
        <PriceAxis />
      </div>
      <Footer />
    </div>
  );
}
